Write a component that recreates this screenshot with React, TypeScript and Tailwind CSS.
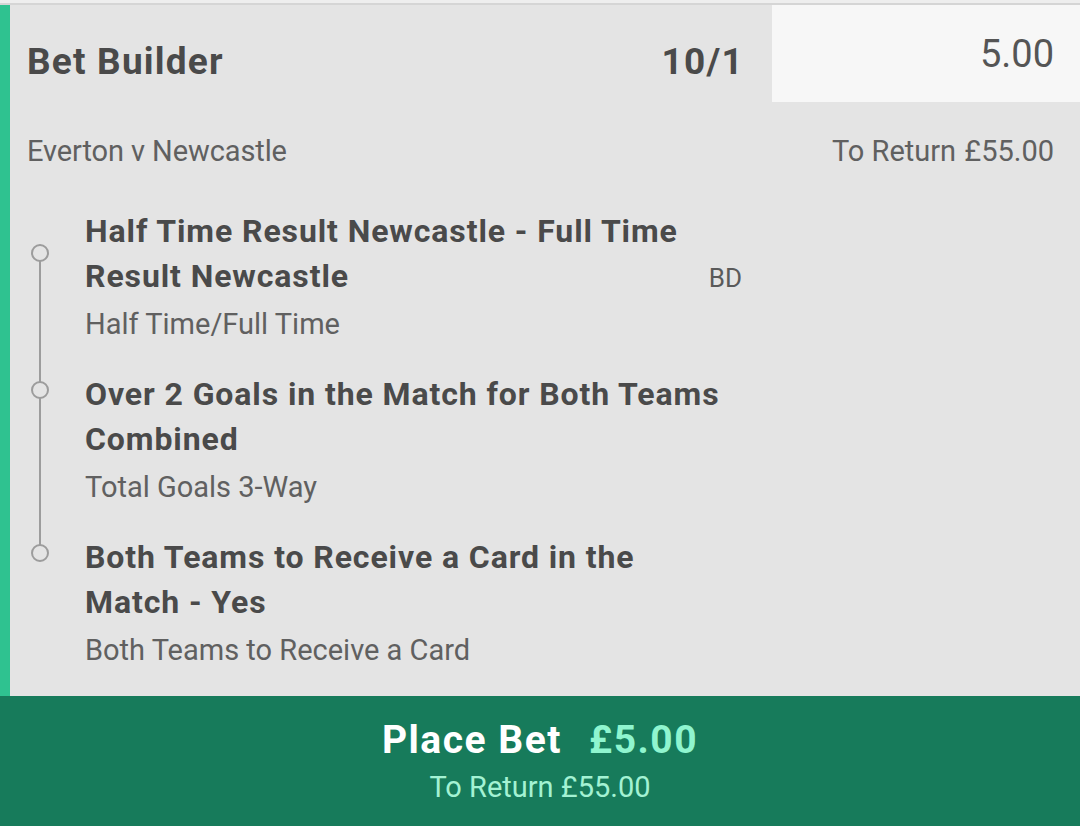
const selections = [
  {
    title: 'Half Time Result Newcastle - Full Time Result Newcastle',
    market: 'Half Time/Full Time',
    badge: 'BD',
  },
  {
    title: 'Over 2 Goals in the Match for Both Teams Combined',
    market: 'Total Goals 3-Way',
  },
  {
    title: 'Both Teams to Receive a Card in the Match - Yes',
    market: 'Both Teams to Receive a Card',
  },
]

const Timeline = () => (
  <svg className="absolute left-0 top-0" width="60" height="600" viewBox="0 0 60 600">
    <line x1="30" y1="256" x2="30" y2="540" stroke="#9c9c9c" strokeWidth="2" />
    {[248, 385, 548].map((cy) => (
      <circle key={cy} cx="30" cy={cy} r="8" fill="#e4e4e4" stroke="#9c9c9c" strokeWidth="2" />
    ))}
  </svg>
)

export default function App() {
  return (
    <div className="flex h-[826px] w-[1080px] flex-col bg-[#e4e4e4] font-['Roboto',sans-serif]">
      {/* Top edge */}
      <div className="h-[3px] bg-[#eeeeee]" />
      <div className="h-[2px] bg-[#d5d5d5]" />

      <div className="flex flex-1">
        <div className="w-[10px] bg-[#2fc290]" />

        <div className="relative flex-1">
          <Timeline />

          {/* Header row */}
          <div className="flex h-[97px]">
            <div className="flex flex-1 items-start justify-between pl-[17px] pr-[28px] pt-[37px]">
              <p className="text-[37px] font-bold leading-[40px] tracking-[1.2px] text-[#4a4a4a]">Bet Builder</p>
              <p className="text-[37px] font-bold leading-[40px] tracking-[1.3px] text-[#4a4a4a]">10/1</p>
            </div>
            <div className="flex w-[308px] items-center justify-end bg-[#f7f7f7] pr-[26px]">
              <span className="text-[38px] leading-none text-[#555555]">5.00</span>
            </div>
          </div>

          {/* Event row */}
          <div className="mt-[33px] flex justify-between pl-[17px] pr-[26px] text-[29px] leading-[32px] text-[#606060]">
            <p className="tracking-[-0.1px]">Everton v Newcastle</p>
            <p>
              To Return <span className="ml-[1px]">£55.00</span>
            </p>
          </div>

          {/* Selections */}
          <div className="mt-[42px] flex flex-col gap-[32px] pl-[75px]">
            {selections.map((s) => (
              <div key={s.title} className="relative w-[657px]">
                <p className="w-[648px] text-[32px] font-bold leading-[45px] tracking-[0.9px] text-[#4a4a4a]">{s.title}</p>
                <p className="mt-[9px] text-[29px] leading-[32px] text-[#606060]">{s.market}</p>
                {s.badge && (
                  <span className="absolute right-0 top-[54px] text-[26px] leading-[30px] text-[#5a5a5a]">
                    {s.badge}
                  </span>
                )}
              </div>
            ))}
          </div>
        </div>
      </div>

      {/* Place bet button */}
      <button className="flex h-[130px] flex-col items-center justify-center bg-[#177b5b] pb-[2px]">
        <span className="flex items-baseline gap-[27px] text-[39px] font-bold leading-[46px] tracking-[1.5px]">
          <span className="text-white">Place Bet</span>
          <span className="text-[#8ff5cf]">£5.00</span>
        </span>
        <span className="mt-[8px] text-[29px] leading-[32px] text-[#a3f2d3]">To Return £55.00</span>
      </button>
    </div>
  )
}
